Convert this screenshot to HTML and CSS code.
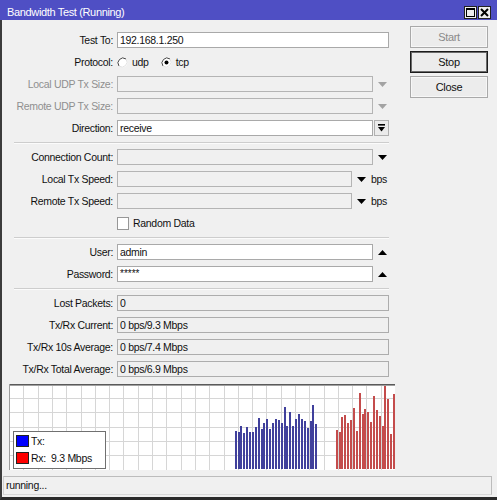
FILE: index.html
```html
<!DOCTYPE html>
<html>
<head>
<meta charset="utf-8">
<title>Bandwidth Test</title>
<link rel="stylesheet" href="styles.css">
</head>
<body>
<div class="win">
  <div class="titlebar">
    <span class="title">Bandwidth Test (Running)</span>
    <div class="tbtns">
      <span class="tbtn"><svg width="9" height="9" viewBox="0 0 9 9"><rect x="0.5" y="0.5" width="8" height="8" fill="none" stroke="#000"/><rect x="0" y="0" width="9" height="2" fill="#000"/></svg></span>
      <span class="tbtn"><svg width="9" height="9" viewBox="0 0 9 9"><path d="M1 1 L8 8 M8 1 L1 8" stroke="#000" stroke-width="2"/></svg></span>
    </div>
  </div>
  <div class="frame">
    <div class="main">
      <div class="form">
        <div class="section">
          <div class="row"><span class="lbl">Test To:</span><div class="field w-full">192.168.1.250</div></div>
          <div class="row"><span class="lbl">Protocol:</span>
            <div class="radios">
              <span class="radio"><svg width="11" height="11" viewBox="0 0 11 11"><circle cx="5.5" cy="5.5" r="5" fill="#fff"/><path d="M2 9 A5 5 0 0 1 9 2" fill="none" stroke="#444" stroke-width="1"/><path d="M9 2 A5 5 0 0 1 2 9" fill="none" stroke="#e2e2e2" stroke-width="1"/></svg><span class="rtext">udp</span></span>
              <span class="radio"><svg width="11" height="11" viewBox="0 0 11 11"><circle cx="5.5" cy="5.5" r="5" fill="#fff"/><path d="M2 9 A5 5 0 0 1 9 2" fill="none" stroke="#444" stroke-width="1"/><path d="M9 2 A5 5 0 0 1 2 9" fill="none" stroke="#e2e2e2" stroke-width="1"/><circle cx="5.5" cy="5.5" r="2" fill="#000"/></svg><span class="rtext">tcp</span></span>
            </div>
          </div>
          <div class="row"><span class="lbl dim">Local UDP Tx Size:</span><div class="field w-combo off"></div><svg class="arr" width="9" height="5" viewBox="0 0 9 5"><polygon points="0,0 9,0 4.5,5" fill="#a3a3a3"/></svg></div>
          <div class="row"><span class="lbl dim">Remote UDP Tx Size:</span><div class="field w-combo off"></div><svg class="arr" width="9" height="5" viewBox="0 0 9 5"><polygon points="0,0 9,0 4.5,5" fill="#a3a3a3"/></svg></div>
          <div class="row"><span class="lbl">Direction:</span><div class="field w-combo">receive</div><span class="dirbtn"><svg width="7" height="8" viewBox="0 0 7 8"><rect x="0" y="0" width="7" height="1.6" fill="#000"/><polygon points="0,3 7,3 3.5,7.5" fill="#000"/></svg></span></div>
        </div>
        <div class="sep"></div>
        <div class="section">
          <div class="row"><span class="lbl">Connection Count:</span><div class="field w-combo off"></div><svg class="arr" width="9" height="5" viewBox="0 0 9 5"><polygon points="0,0 9,0 4.5,5" fill="#000"/></svg></div>
          <div class="row"><span class="lbl">Local Tx Speed:</span><div class="field w-speed off"></div><svg class="arr" width="9" height="5" viewBox="0 0 9 5"><polygon points="0,0 9,0 4.5,5" fill="#000"/></svg><span class="unit">bps</span></div>
          <div class="row"><span class="lbl">Remote Tx Speed:</span><div class="field w-speed off"></div><svg class="arr" width="9" height="5" viewBox="0 0 9 5"><polygon points="0,0 9,0 4.5,5" fill="#000"/></svg><span class="unit">bps</span></div>
          <div class="row"><span class="lbl"></span><span class="check"></span><span class="ctext">Random Data</span></div>
        </div>
        <div class="sep"></div>
        <div class="section">
          <div class="row"><span class="lbl">User:</span><div class="field w-combo">admin</div><svg class="arr" width="9" height="5" viewBox="0 0 9 5"><polygon points="0,5 9,5 4.5,0" fill="#000"/></svg></div>
          <div class="row"><span class="lbl">Password:</span><div class="field w-combo pw">*****</div><svg class="arr" width="9" height="5" viewBox="0 0 9 5"><polygon points="0,5 9,5 4.5,0" fill="#000"/></svg></div>
        </div>
        <div class="sep"></div>
        <div class="section">
          <div class="row"><span class="lbl">Lost Packets:</span><div class="field w-full ro">0</div></div>
          <div class="row"><span class="lbl">Tx/Rx Current:</span><div class="field w-full ro">0 bps/9.3 Mbps</div></div>
          <div class="row"><span class="lbl">Tx/Rx 10s Average:</span><div class="field w-full ro">0 bps/7.4 Mbps</div></div>
          <div class="row"><span class="lbl">Tx/Rx Total Average:</span><div class="field w-full ro">0 bps/6.9 Mbps</div></div>
        </div>
      </div>
      <div class="buttons">
        <div class="btn disabled">Start</div>
        <div class="btn default">Stop</div>
        <div class="btn">Close</div>
      </div>
    </div>
    <div class="graph">
      <svg width="386" height="86" viewBox="0 0 386 86">
        <rect x="0" y="0" width="386" height="86" fill="#fff"/>
        <g stroke="#d6d6d6" stroke-width="1">
          <path d="M14.5 0V86M29.5 0V86M43.5 0V86M57.5 0V86M72.5 0V86M86.5 0V86M100.5 0V86M114.5 0V86M129.5 0V86M143.5 0V86M157.5 0V86M172.5 0V86M186.5 0V86M200.5 0V86M215.5 0V86M229.5 0V86M243.5 0V86M257.5 0V86M272.5 0V86M286.5 0V86M300.5 0V86M315.5 0V86M329.5 0V86M343.5 0V86M357.5 0V86M372.5 0V86"/>
          <path d="M0 14.5H386M0 28.5H386M0 43.5H386M0 57.5H386M0 71.5H386"/>
        </g>
        <path d="M0 0.5H386" stroke="#5a5a5a" stroke-width="1"/>
        <path d="M0 1.5H386" stroke="#a0a0a0" stroke-width="1"/>
        <path d="M0.5 0V86" stroke="#9c9c9c" stroke-width="1"/>
        <g fill="#40409c">
          <rect x="226" y="47" width="2" height="38"/>
          <rect x="229" y="48" width="2" height="37"/>
          <rect x="231" y="42" width="2" height="43"/>
          <rect x="234" y="49" width="2" height="36"/>
          <rect x="237" y="43" width="2" height="42"/>
          <rect x="240" y="48" width="2" height="37"/>
          <rect x="243" y="48" width="2" height="37"/>
          <rect x="246" y="43" width="2" height="42"/>
          <rect x="249" y="34" width="2" height="51"/>
          <rect x="252" y="45" width="2" height="40"/>
          <rect x="254" y="39" width="2" height="46"/>
          <rect x="257" y="35" width="2" height="50"/>
          <rect x="260" y="45" width="2" height="40"/>
          <rect x="263" y="39" width="2" height="46"/>
          <rect x="266" y="35" width="2" height="50"/>
          <rect x="269" y="36" width="2" height="49"/>
          <rect x="272" y="39" width="2" height="46"/>
          <rect x="275" y="23" width="2" height="62"/>
          <rect x="277" y="42" width="2" height="43"/>
          <rect x="280" y="28" width="2" height="57"/>
          <rect x="283" y="42" width="2" height="43"/>
          <rect x="286" y="35" width="2" height="50"/>
          <rect x="289" y="30" width="2" height="55"/>
          <rect x="292" y="35" width="2" height="50"/>
          <rect x="295" y="37" width="2" height="48"/>
          <rect x="298" y="44" width="2" height="41"/>
          <rect x="301" y="37" width="2" height="48"/>
          <rect x="303" y="21" width="2" height="64"/>
          <rect x="306" y="40" width="2" height="45"/>
        </g>
        <g fill="#c44c4c">
          <rect x="327" y="46" width="2" height="39"/>
          <rect x="330" y="48" width="2" height="37"/>
          <rect x="332" y="33" width="2" height="52"/>
          <rect x="335" y="31" width="2" height="54"/>
          <rect x="338" y="39" width="2" height="46"/>
          <rect x="341" y="36" width="2" height="49"/>
          <rect x="344" y="24" width="2" height="61"/>
          <rect x="347" y="47" width="2" height="38"/>
          <rect x="350" y="9" width="2" height="76"/>
          <rect x="353" y="30" width="2" height="55"/>
          <rect x="355" y="25" width="2" height="60"/>
          <rect x="358" y="28" width="2" height="57"/>
          <rect x="361" y="38" width="2" height="47"/>
          <rect x="364" y="12" width="2" height="73"/>
          <rect x="367" y="26" width="2" height="59"/>
          <rect x="370" y="32" width="2" height="53"/>
          <rect x="373" y="42" width="2" height="43"/>
          <rect x="375" y="2" width="2" height="83"/>
          <rect x="378" y="15" width="2" height="70"/>
          <rect x="381" y="50" width="2" height="35"/>
          <rect x="384" y="10" width="2" height="75"/>
        </g>
      </svg>
      <div class="legend">
        <div class="lrow"><span class="swatch tx"></span><span>Tx:</span></div>
        <div class="lrow"><span class="swatch rx"></span><span>Rx:&nbsp;&nbsp;9.3 Mbps</span></div>
      </div>
    </div>
    <div class="status">running...</div>
  </div>
</div>
</body>
</html>
```

FILE: styles.css
```css
* { box-sizing: border-box; }
html, body { margin: 0; padding: 0; }
body {
  width: 497px;
  height: 500px;
  overflow: hidden;
  background: #f0f0f0;
  font-family: "Liberation Sans", Arial, sans-serif;
  font-size: 10.5px;
  color: #111;
  letter-spacing: -0.3px;
}
.win { width: 497px; height: 500px; display: flex; flex-direction: column; }
.titlebar {
  height: 20px;
  background: #4f4fc4;
  display: flex;
  align-items: flex-end;
  justify-content: space-between;
  padding: 0 6px 1px 7px;
}
.title { color: #fff; font-size: 11px; letter-spacing: -0.35px; line-height: 14px; }
.tbtns { display: flex; gap: 1px; }
.tbtn {
  width: 13px; height: 13px;
  background: #eeeeee;
  border: 1px solid #222;
  display: flex; align-items: center; justify-content: center;
}
.frame {
  flex: 1;
  border-left: 2px solid #3c3c3c;
  border-bottom: 3px solid #2a2a2a;
  padding: 6px 0 2px 0;
}
.main { display: flex; }
.form { width: 387px; padding-top: 6px; }
.row { display: flex; align-items: center; height: 16px; }
.row + .row { margin-top: 6px; }
.lbl { width: 111px; margin-right: 4px; text-align: right; white-space: nowrap; }
.lbl.dim { color: #8f8f8f; }
.field {
  height: 16px;
  border: 1px solid #a9a9a9;
  background: #fff;
  padding: 0 2px;
  line-height: 14px;
  white-space: nowrap;
  overflow: hidden;
}
.field.pw { letter-spacing: 0; font-size: 10px; }
.w-full { width: 272px; }
.w-combo { width: 256px; }
.w-speed { width: 235px; }
.field.off { background: #f0f0f0; border-color: #b4b4b4; }
.field.ro { background: #f0f0f0; border-color: #adadad; }
.arr { display: block; margin-left: 5px; }
.unit { margin-left: 5px; }
.dirbtn {
  width: 15px; height: 16px;
  margin-left: 1px;
  border: 1px solid #b0b0b0;
  background: #ebebeb;
  display: flex; align-items: center; justify-content: center;
}
.radios { display: flex; align-items: center; }
.radio { display: flex; align-items: center; margin-right: 12px; }
.radio svg { display: block; }
.rtext { margin-left: 4px; }
.check {
  width: 12px; height: 13px;
  background: #fff;
  border: 1px solid #979797;
}
.ctext { margin-left: 4px; }
.sep {
  height: 1px;
  background: #cdcdcd;
  box-shadow: 0 1px 0 #fbfbfb;
  margin: 6px 0 6px 12px;
}
.buttons { margin-left: 21px; display: flex; flex-direction: column; gap: 3px; }
.btn {
  width: 78px; height: 22px;
  border: 1px solid #a9a9a9;
  box-shadow: inset 0 0 0 1px #f7f7f7;
  background: #ececec;
  text-align: center;
  line-height: 20px;
  font-size: 11px;
}
.btn.disabled { color: #8a8a8a; }
.btn.default { border-color: #1c1c1c; box-shadow: inset 0 0 0 1px #6a6a6a; }
.graph {
  position: relative;
  width: 386px; height: 86px;
  margin: 7px 0 0 7px;
}
.graph svg { display: block; }
.legend {
  position: absolute;
  left: 4px; top: 47px;
  width: 93px; height: 38px;
  background: #fff;
  border: 1px solid #707070;
  padding: 2px 0 0 2px;
}
.lrow { display: flex; align-items: center; height: 13px; }
.lrow + .lrow { margin-top: 4px; }
.swatch { width: 13px; height: 12px; border: 1px solid #222; margin-right: 2px; }
.swatch.tx { background: #0000ff; }
.swatch.rx { background: #ff0000; }
.status {
  margin: 6px 0 0 1px;
  width: 489px; height: 19px;
  border-top: 1px solid #bcbcbc;
  border-left: 1px solid #d0d0d0;
  border-right: 1px solid #bcbcbc;
  border-bottom: 1px solid #d8d8d8;
  padding-left: 2px;
  line-height: 17px;
}
```
